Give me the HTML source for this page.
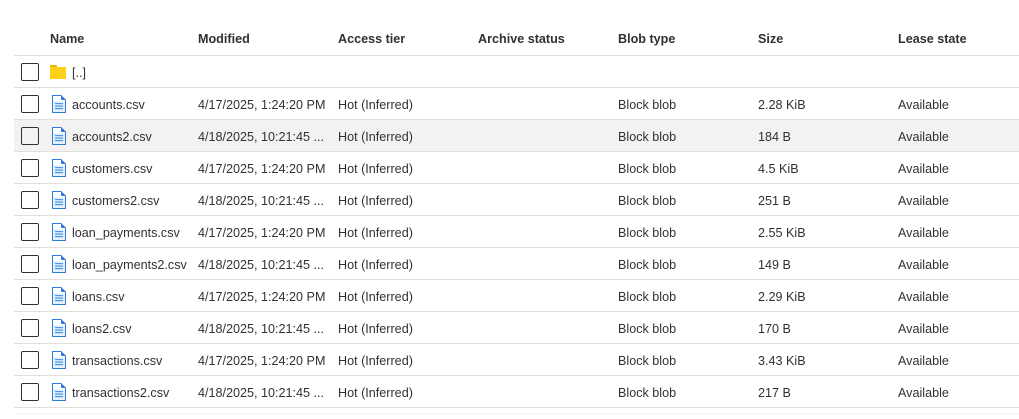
<!DOCTYPE html>
<html><head><meta charset="utf-8"><style>
body{margin:0;width:1019px;height:419px;background:#fff;font-family:"Liberation Sans",sans-serif;font-size:12.6px;color:#323130;position:relative;overflow:hidden}
.row{position:absolute;left:14px;width:1005px;height:31px;border-bottom:1px solid #e1dfdd}
.hdr{position:absolute;left:14px;width:1005px;top:0;height:55px;border-bottom:1px solid #e1dfdd}
.c{position:absolute;top:1px;line-height:32px;white-space:nowrap}
.hdr .c{top:1px;line-height:77px;font-weight:600;color:#323130}
.cb{position:absolute;left:7px;top:7px;width:16px;height:16px;border:1px solid #323130;border-radius:2px}
.ic{position:absolute;left:37px;top:7px}
</style></head><body>
<div class="hdr">
<div class="c" style="left:36px">Name</div>
<div class="c" style="left:184px">Modified</div>
<div class="c" style="left:324px">Access tier</div>
<div class="c" style="left:464px">Archive status</div>
<div class="c" style="left:604px">Blob type</div>
<div class="c" style="left:744px">Size</div>
<div class="c" style="left:884px">Lease state</div>
</div>
<div class="row" style="top:56px"><div class="cb"></div>
<svg class="ic" width="17" height="15" viewBox="0 0 17 15" style="top:9px;left:36px"><rect x="0" y="0" width="7" height="3" rx="1" fill="#eab300"/><rect x="0" y="2" width="16" height="12" fill="#fcd116"/></svg>
<div class="c" style="left:58px">[..]</div></div>
<script>
const d=[["accounts.csv","4/17/2025, 1:24:20 PM","2.28 KiB"],["accounts2.csv","4/18/2025, 10:21:45 ...","184 B"],["customers.csv","4/17/2025, 1:24:20 PM","4.5 KiB"],["customers2.csv","4/18/2025, 10:21:45 ...","251 B"],["loan_payments.csv","4/17/2025, 1:24:20 PM","2.55 KiB"],["loan_payments2.csv","4/18/2025, 10:21:45 ...","149 B"],["loans.csv","4/17/2025, 1:24:20 PM","2.29 KiB"],["loans2.csv","4/18/2025, 10:21:45 ...","170 B"],["transactions.csv","4/17/2025, 1:24:20 PM","3.43 KiB"],["transactions2.csv","4/18/2025, 10:21:45 ...","217 B"]];
d.forEach((r,i)=>{document.write(`<div class="row" style="top:${88+32*i}px;${i==1?'background:#f3f2f1':''}"><div class="cb"></div>
<svg class="ic" width="16" height="18" viewBox="0 0 16 18" style="top:7px"><path d="M1.5 0.5H10L14.5 5V17.5H1.5Z" fill="#fff" stroke="#2f7bd6"/><path d="M10 0.5V5H14.5" fill="#2f7bd6"/><rect x="2" y="6" width="12" height="11" fill="#cfe4fa" opacity=".5"/><rect x="4" y="8" width="8" height="1.2" fill="#4a96e0"/><rect x="4" y="10.5" width="8" height="1.2" fill="#4a96e0"/><rect x="4" y="13" width="8" height="1.2" fill="#4a96e0"/></svg>
<div class="c" style="left:58px">${r[0]}</div><div class="c" style="left:184px">${r[1]}</div><div class="c" style="left:324px">Hot (Inferred)</div><div class="c" style="left:604px">Block blob</div><div class="c" style="left:744px">${r[2]}</div><div class="c" style="left:884px">Available</div></div>`)});
</script>
<div style="position:absolute;left:14px;top:413px;width:1005px;height:1px;background:#f3f2f1"></div>
</body></html>
